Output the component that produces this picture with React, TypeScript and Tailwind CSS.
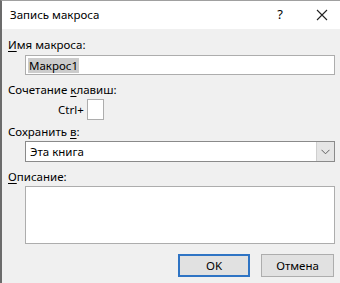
import React from "react";

export default function App() {
  const font = { fontFamily: '"Segoe UI", "Noto Sans", "Open Sans", sans-serif' };
  return (
    <div
      className="w-[340px] h-[283px] bg-[#f0f0f0] border-l-2 border-l-[#6b6b6b] border-t border-t-[#a0a0a0] flex flex-col text-[11.5px] text-black overflow-hidden"
      style={font}
    >
      <div className="h-[28px] bg-white flex items-center pl-[8px] shrink-0">
        <span className="text-[11.5px] flex-1">Запись макроса</span>
        <span className="w-[20px] text-center text-[13px] mr-[26px]">?</span>
        <svg width="12" height="12" viewBox="0 0 12 12" className="mr-[12px]">
          <path d="M1 1L11 11M11 1L1 11" stroke="#222" strokeWidth="1.1" />
        </svg>
      </div>
      <div className="flex flex-col pl-[6px] pr-[5px] pt-[8px]">
        <div className="h-[16px] leading-[16px]">
          <span className="underline underline-offset-2">И</span>мя макроса:
        </div>
        <div className="ml-[17px] mt-[2px] h-[20px] bg-white border border-[#adadad] flex items-center px-[2px]">
          <span className="bg-[#cccccc] px-[1px] leading-[15px]">Макрос1</span>
        </div>
        <div className="h-[16px] leading-[16px] mt-[7px]">
          Сочетание <span className="underline underline-offset-2">к</span>лавиш:
        </div>
        <div className="flex items-center ml-[50px] mt-[1px]">
          <span>Ctrl+</span>
          <div className="w-[17px] h-[21px] bg-white border border-[#adadad] ml-[3px]" />
        </div>
        <div className="h-[16px] leading-[16px] mt-[4px]">
          Сохранить <span className="underline underline-offset-2">в</span>:
        </div>
        <div className="ml-[17px] mt-[1px] h-[21px] bg-white border border-[#8a8a8a] flex items-stretch">
          <span className="flex-1 pl-[4px] leading-[19px]">Эта книга</span>
          <div className="w-[18px] bg-[#e5e5e5] border-l border-[#cfcfcf] flex items-center justify-center">
            <svg width="9" height="6" viewBox="0 0 9 6">
              <path d="M0.5 0.8L4.5 4.8L8.5 0.8" stroke="#606060" strokeWidth="1" fill="none" />
            </svg>
          </div>
        </div>
        <div className="h-[16px] leading-[16px] mt-[7px]">
          <span className="underline underline-offset-2">О</span>писание:
        </div>
        <div className="ml-[17px] mt-[1px] h-[58px] bg-white border border-[#adadad]" />
        <div className="flex justify-end gap-[11px] mt-[10px] pr-[1px]">
          <button className="w-[72px] h-[23px] bg-[#e1e1e1] border-2 border-[#2f74c4] text-[11.5px]" style={font}>
            OK
          </button>
          <button className="w-[73px] h-[23px] bg-[#e1e1e1] border border-[#adadad] text-[11.5px]" style={font}>
            Отмена
          </button>
        </div>
      </div>
    </div>
  );
}
